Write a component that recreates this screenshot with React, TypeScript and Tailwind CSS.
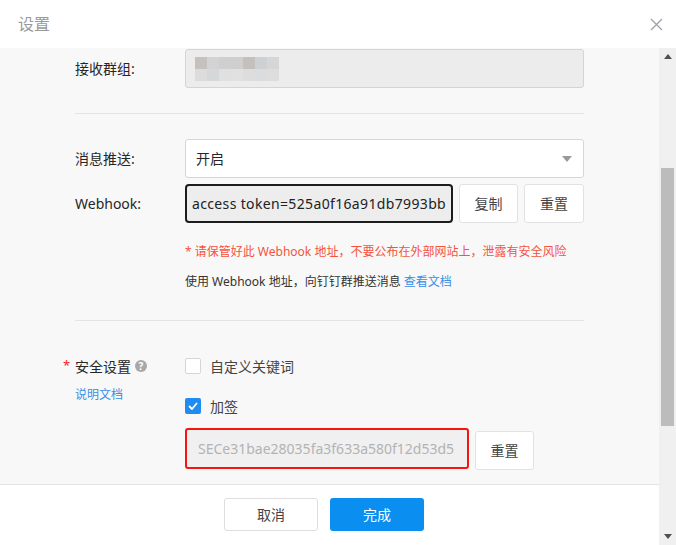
import React from "react";

const font = { fontFamily: '"Noto Sans", "Noto Sans CJK SC", sans-serif' };

function Blur() {
  const top = ["#c6c1be", "#d3d3d3", "#cfcfcf", "#cfcfcf", "#c4c0bd", "#cdd1d4", "#d6d6d6"];
  const bot = ["#dcdcdc", "#d5d8d8", "#e0e0e0", "#e1e1e1", "#dddddd", "#dadcdd", "#dddddd"];
  return (
    <div className="flex flex-col">
      <div className="flex">
        {top.map((c, i) => (
          <div key={i} className="w-[12px] h-[12px]" style={{ background: c }} />
        ))}
      </div>
      <div className="flex">
        {bot.map((c, i) => (
          <div key={i} className="w-[12px] h-[12px]" style={{ background: c }} />
        ))}
      </div>
    </div>
  );
}

export default function App() {
  return (
    <div className="w-[676px] h-[545px] overflow-hidden bg-white flex flex-col text-[#262626]" style={font}>
      {/* header */}
      <div className="h-[48px] flex items-center justify-between pl-[18px] pr-[13px] bg-white shrink-0">
        <span className="text-[16px] text-[#9a9a9a]">设置</span>
        <svg width="13" height="13" viewBox="0 0 13 13">
          <path d="M1 1 L12 12 M12 1 L1 12" stroke="#9aa0a8" strokeWidth="1.2" />
        </svg>
      </div>
      <div className="flex flex-1 min-h-0">
        <div className="flex-1 flex flex-col min-w-0">
          {/* body */}
          <div className="h-[437px] bg-[#f8f8f8] overflow-hidden border-b border-[#e3e3e3] pl-[75px]">
            <div className="w-[509px] flex flex-col pt-[1px]">
              {/* row1 */}
              <div className="flex items-center h-[39px]">
                <div className="w-[110px] shrink-0 text-[14px] whitespace-nowrap">接收群组:</div>
                <div className="flex-1 h-[39px] rounded-[3px] border border-[#d4d4d4] bg-[#ececec] flex items-center pl-[9px]">
                  <Blur />
                </div>
              </div>
              <div className="mt-[25px] h-px bg-[#e4e4e4]" />
              {/* select */}
              <div className="mt-[25px] flex items-center h-[39px]">
                <div className="w-[110px] shrink-0 text-[14px] whitespace-nowrap">消息推送:</div>
                <div className="flex-1 h-[39px] rounded-[3px] border border-[#d6d6d6] bg-white flex items-center justify-between pl-[10px] pr-[11px]">
                  <span className="text-[14px]">开启</span>
                  <svg width="10" height="6" viewBox="0 0 10 6">
                    <path d="M0 0 L10 0 L5 6 Z" fill="#9a9a9a" />
                  </svg>
                </div>
              </div>
              {/* webhook */}
              <div className="mt-[6px] flex items-center h-[39px]">
                <div className="w-[110px] shrink-0 text-[14px] whitespace-nowrap">Webhook:</div>
                <div className="w-[268px] shrink-0 h-[39px] rounded-[4px] border-2 border-[#1c1c1c] bg-[#ededed] flex items-center overflow-hidden pl-[5px]">
                  <span className="text-[14px] whitespace-nowrap text-[#222] tracking-[0.35px]">access token=525a0f16a91db7993bb</span>
                </div>
                <button className="ml-[6px] w-[59px] h-[39px] rounded-[3px] border border-[#e2e2e2] bg-white text-[14px] text-[#444]">复制</button>
                <button className="ml-[6px] w-[60px] h-[39px] rounded-[3px] border border-[#e2e2e2] bg-white text-[14px] text-[#444]">重置</button>
              </div>
              <div className="mt-[20px] pl-[110px] text-[12px] leading-[18px] text-[#f5533d] whitespace-nowrap">
                * 请保管好此 Webhook 地址，不要公布在外部网站上，泄露有安全风险
              </div>
              <div className="mt-[12px] pl-[110px] text-[12px] leading-[18px] text-[#333] whitespace-nowrap">
                使用 Webhook 地址，向钉钉群推送消息 <span className="text-[#3a8ee6]">查看文档</span>
              </div>
              <div className="mt-[29px] h-px bg-[#e4e4e4]" />
              {/* security */}
              <div className="mt-[33px] flex">
                <div className="w-[110px] shrink-0 flex flex-col">
                  <div className="h-[24px] flex items-center text-[14px] whitespace-nowrap">
                    <span className="-ml-[12px] w-[12px] text-[#f5222d] text-[13px]">*</span>
                    <span>安全设置</span>
                    <span className="ml-[4px] w-[12px] h-[12px] rounded-full bg-[#a8a8a8] text-white text-[10px] font-bold leading-[12px] flex items-center justify-center">?</span>
                  </div>
                  <div className="mt-[8px] text-[12px] leading-[18px] text-[#3a8ee6]">说明文档</div>
                </div>
                <div className="flex-1 flex flex-col">
                  <div className="h-[24px] flex items-center">
                    <span className="w-[16px] h-[16px] rounded-[2px] border border-[#d6d6d6] bg-white" />
                    <span className="ml-[9px] text-[14px] text-[#444]">自定义关键词</span>
                  </div>
                  <div className="mt-[16px] h-[24px] flex items-center">
                    <span className="w-[16px] h-[16px] rounded-[2px] bg-[#1e8cf0] flex items-center justify-center">
                      <svg width="10" height="8" viewBox="0 0 10 8">
                        <path d="M1 4 L4 7 L9 1" stroke="white" strokeWidth="1.8" fill="none" />
                      </svg>
                    </span>
                    <span className="ml-[9px] text-[14px] text-[#444]">加签</span>
                  </div>
                  <div className="mt-[10px] flex items-start">
                    <div className="w-[284px] h-[41px] rounded-[3px] border-2 border-[#f5160e] bg-[#f0f0f0] flex items-center pl-[11px] overflow-hidden">
                      <span className="text-[14px] whitespace-nowrap text-[#b3b3b3]">SECe31bae28035fa3f633a580f12d53d5</span>
                    </div>
                    <button className="ml-[6px] mt-[3px] w-[59px] h-[39px] rounded-[3px] border border-[#e2e2e2] bg-white text-[14px] text-[#444]">重置</button>
                  </div>
                </div>
              </div>
            </div>
          </div>
          {/* footer */}
          <div className="flex-1 bg-white flex items-start pt-[13px] pl-[224px] gap-[12px]">
            <button className="w-[94px] h-[33px] rounded-[3px] border border-[#dedede] bg-white text-[14px] text-[#444]">取消</button>
            <button className="w-[94px] h-[33px] rounded-[3px] bg-[#0a8ff0] text-[14px] text-white">完成</button>
          </div>
        </div>
        {/* scrollbar */}
        <div className="w-[17px] bg-[#f0f0f0] flex flex-col items-center">
          <div className="h-[17px] flex items-center justify-center">
            <svg width="8" height="5" viewBox="0 0 8 5"><path d="M0 5 L8 5 L4 0 Z" fill="#505050" /></svg>
          </div>
          <div className="mt-[103px] w-[13px] h-[258px] bg-[#bcbcbc]" />
          <div className="flex-1" />
          <div className="h-[17px] flex items-center justify-center">
            <svg width="8" height="5" viewBox="0 0 8 5"><path d="M0 0 L8 0 L4 5 Z" fill="#505050" /></svg>
          </div>
        </div>
      </div>
    </div>
  );
}
